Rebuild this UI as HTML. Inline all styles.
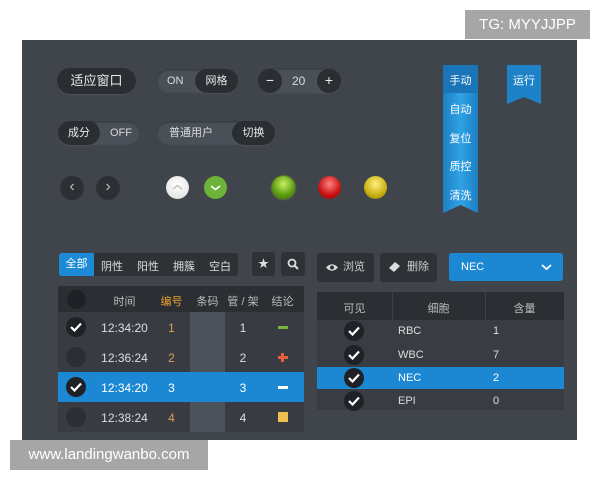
<!DOCTYPE html>
<html><head><meta charset="utf-8"><style>
*{margin:0;padding:0;box-sizing:border-box}
body{width:600px;height:480px;background:#fff;position:relative;overflow:hidden;font-family:"Liberation Sans","Noto Sans CJK SC",sans-serif;}
.a{position:absolute}
#p{left:22px;top:40px;width:555px;height:400px;background:#40454c}
.pill{position:absolute;border-radius:13px;background:#4a5058;box-shadow:inset 0 1px 2px rgba(0,0,0,.35);color:#d8dadd;font-size:11px}
.pill span{line-height:24px;top:0 !important}
.dk{position:absolute;background:#2a2d32;border-radius:13px;color:#e8e8e8;font-size:11px;text-align:center;box-shadow:0 1px 1px rgba(255,255,255,.08)}
.c{position:absolute;border-radius:50%}
.t{position:absolute;font-size:11px;color:#ddd;text-align:center}
.chk{position:absolute;width:20px;height:20px;border-radius:50%;background:#1e2125}
.chk svg{position:absolute;left:4px;top:5px}
</style></head><body>
<div class="a" style="left:465px;top:10px;width:125px;height:29px;background:#a6a6a6;color:#fff;font-size:15px;line-height:29px;text-align:center">TG: MYYJJPP</div>
<div id="p" class="a"></div>

<!-- row 1 -->
<div class="dk" style="left:57px;top:68px;width:79px;height:26px;line-height:26px;font-size:13px">适应窗口</div>
<div class="pill" style="left:157px;top:69px;width:81px;height:24px"><span class="a" style="left:10px">ON</span><div class="dk" style="left:38px;top:0;width:43px;height:24px;line-height:24px">网格</div></div>
<div class="pill" style="left:257px;top:68px;width:85px;height:26px"><div class="c" style="left:1px;top:1px;width:24px;height:24px;background:#2a2d32;color:#eee;text-align:center;line-height:22px;font-size:14px">−</div><span class="a" style="left:35px;line-height:26px !important;font-size:12px">20</span><div class="c" style="left:60px;top:1px;width:24px;height:24px;background:#2a2d32;color:#eee;text-align:center;line-height:23px;font-size:14px">+</div></div>

<!-- row 2 -->
<div class="pill" style="left:58px;top:121px;width:82px;height:24px"><div class="dk" style="left:0;top:0;width:42px;height:24px;line-height:24px">成分</div><span class="a" style="left:52px">OFF</span></div>
<div class="pill" style="left:157px;top:121px;width:118px;height:24px"><span class="a" style="left:12px">普通用户</span><div class="dk" style="left:75px;top:0;width:43px;height:24px;line-height:24px">切换</div></div>

<!-- row 3 -->
<div class="c" style="left:60px;top:176px;width:24px;height:24px;background:#2c3035;color:#bbb;text-align:center;line-height:22px;font-size:16px">‹</div>
<div class="c" style="left:96px;top:176px;width:24px;height:24px;background:#2c3035;color:#bbb;text-align:center;line-height:22px;font-size:16px">›</div>
<div class="c" style="left:166px;top:176px;width:23px;height:23px;background:radial-gradient(circle at 50% 40%,#fff,#ddd)"><svg class="a" style="left:6px;top:8px" width="11" height="6"><path d="M1 5L5.5 1.5L10 5" stroke="#bbb" fill="none" stroke-width="1.3"/></svg></div>
<div class="c" style="left:204px;top:176px;width:23px;height:23px;background:#6cb33a"><svg class="a" style="left:6px;top:9px" width="11" height="6"><path d="M1 1L5.5 4.5L10 1" stroke="#fff" fill="none" stroke-width="1.5"/></svg></div>
<div class="c" style="left:272px;top:176px;width:23px;height:23px;background:radial-gradient(circle at 50% 35%,#c8f060,#5a9a10 60%,#3c6c08);box-shadow:0 0 2px #8c0"></div>
<div class="c" style="left:318px;top:176px;width:23px;height:23px;background:radial-gradient(circle at 50% 35%,#ff8080,#c81010 60%,#801010)"></div>
<div class="c" style="left:364px;top:176px;width:23px;height:23px;background:radial-gradient(circle at 50% 35%,#fff080,#c8b010 60%,#807008)"></div>

<!-- ribbons -->
<svg class="a" style="left:443px;top:65px" width="36" height="149"><defs><linearGradient id="g" x1="0" x2="1"><stop offset="0" stop-color="#1d7fc4"/><stop offset=".5" stop-color="#2fa3e6"/><stop offset="1" stop-color="#1d7fc4"/></linearGradient></defs><path d="M0 0H35V148L17.5 140L0 148Z" fill="url(#g)"/><rect width="35" height="28" fill="#1a75b8"/></svg>
<div class="t" style="left:443px;top:72px;width:35px;color:#fff">手动</div>
<div class="t" style="left:443px;top:101px;width:35px;color:#fff">自动</div>
<div class="t" style="left:443px;top:130px;width:35px;color:#fff">复位</div>
<div class="t" style="left:443px;top:158px;width:35px;color:#fff">质控</div>
<div class="t" style="left:443px;top:187px;width:35px;color:#fff">清洗</div>
<svg class="a" style="left:507px;top:65px" width="35" height="40"><path d="M0 0H34V39L17 32L0 39Z" fill="#1d82c8"/></svg>
<div class="t" style="left:507px;top:72px;width:34px;color:#fff">运行</div>

<!-- tabs -->
<div class="a" style="left:59px;top:253px;width:179px;height:23px;background:#2e3237;border-radius:3px"></div>
<div class="a" style="left:59px;top:253px;width:35px;height:23px;background:#1c8ad6;border-radius:3px 0 0 3px;color:#fff;font-size:11px;text-align:center;line-height:23px">全部</div>
<div class="t" style="left:94px;top:258px;width:36px">阴性</div>
<div class="t" style="left:130px;top:258px;width:36px">阳性</div>
<div class="t" style="left:166px;top:258px;width:36px">拥簇</div>
<div class="t" style="left:202px;top:258px;width:36px">空白</div>
<div class="a" style="left:252px;top:252px;width:23px;height:24px;background:#2e3237;border-radius:3px;color:#ddd;font-size:11px;text-align:center;line-height:24px">★</div>
<div class="a" style="left:281px;top:252px;width:24px;height:24px;background:#2e3237;border-radius:3px"><svg class="a" style="left:6px;top:6px" width="12" height="12"><circle cx="5" cy="5" r="3.5" stroke="#ddd" stroke-width="1.8" fill="none"/><path d="M7.5 7.5L11 11" stroke="#ddd" stroke-width="2"/></svg></div>

<!-- left table -->
<div class="a" style="left:58px;top:286px;width:246px;height:26px;background:#2b2e33"></div>
<div class="c" style="left:67px;top:290px;width:19px;height:19px;background:#1e2125"></div>
<div class="t" style="left:96px;top:293px;width:57px;color:#bbb">时间</div>
<div class="t" style="left:153px;top:293px;width:37px;color:#e8a030">编号</div>
<div class="t" style="left:190px;top:293px;width:35px;color:#bbb">条码</div>
<div class="t" style="left:225px;top:293px;width:36px;color:#bbb">管 / 架</div>
<div class="t" style="left:261px;top:293px;width:43px;color:#bbb">结论</div>
<div class="a" style="left:58px;top:312px;width:246px;height:120px;background:#383c42"></div>
<div class="a" style="left:190px;top:312px;width:35px;height:120px;background:#4d535b"></div>
<div class="a" style="left:58px;top:372px;width:246px;height:30px;background:#1c88d4"></div>
<div class="chk" style="left:66px;top:317px"><svg width="12" height="10"><path d="M1 5L4.5 8.5L11 1.5" stroke="#fff" stroke-width="2.2" fill="none"/></svg></div>
<div class="chk" style="left:66px;top:347px;background:#2b2f34"></div>
<div class="chk" style="left:66px;top:377px"><svg width="12" height="10"><path d="M1 5L4.5 8.5L11 1.5" stroke="#fff" stroke-width="2.2" fill="none"/></svg></div>
<div class="chk" style="left:66px;top:407px;background:#2b2f34"></div>
<div class="t" style="left:96px;top:321px;width:57px;font-size:12px">12:34:20</div>
<div class="t" style="left:96px;top:351px;width:57px;font-size:12px">12:36:24</div>
<div class="t" style="left:96px;top:381px;width:57px;font-size:12px;color:#fff">12:34:20</div>
<div class="t" style="left:96px;top:411px;width:57px;font-size:12px">12:38:24</div>
<div class="t" style="left:153px;top:321px;width:37px;color:#d8a050;font-size:12px">1</div>
<div class="t" style="left:153px;top:351px;width:37px;color:#d8a050;font-size:12px">2</div>
<div class="t" style="left:153px;top:381px;width:37px;color:#fff;font-size:12px">3</div>
<div class="t" style="left:153px;top:411px;width:37px;color:#d8a050;font-size:12px">4</div>
<div class="t" style="left:225px;top:321px;width:36px;font-size:12px">1</div>
<div class="t" style="left:225px;top:351px;width:36px;font-size:12px">2</div>
<div class="t" style="left:225px;top:381px;width:36px;font-size:12px;color:#fff">3</div>
<div class="t" style="left:225px;top:411px;width:36px;font-size:12px">4</div>
<div class="a" style="left:278px;top:326px;width:10px;height:3px;background:#7cb342"></div>
<div class="a" style="left:278px;top:356px;width:10px;height:3px;background:#e8603c"></div>
<div class="a" style="left:281px;top:353px;width:3px;height:9px;background:#e8603c"></div>
<div class="a" style="left:278px;top:386px;width:10px;height:3px;background:#fff"></div>
<div class="a" style="left:278px;top:412px;width:10px;height:10px;background:#f0c050"></div>

<!-- right buttons -->
<div class="a" style="left:317px;top:253px;width:57px;height:29px;background:#2e3237;border-radius:3px;color:#ccc;font-size:11px;line-height:29px;padding-left:26px">浏览</div>
<svg class="a" style="left:325px;top:263px" width="14" height="9"><path d="M1 4.5Q7 -2 13 4.5Q7 11 1 4.5Z" fill="#ddd"/><circle cx="7" cy="4.5" r="2" fill="#2e3237"/></svg>
<div class="a" style="left:380px;top:253px;width:57px;height:29px;background:#2e3237;border-radius:3px;color:#ccc;font-size:11px;line-height:29px;padding-left:27px">删除</div>
<svg class="a" style="left:388px;top:261px" width="13" height="12"><path d="M1 7L7 1L12 5L6 11Z" fill="#ddd"/></svg>
<div class="a" style="left:449px;top:253px;width:114px;height:28px;background:#1c88d4;border-radius:3px;color:#fff;font-size:11px;line-height:28px;padding-left:12px">NEC</div>
<svg class="a" style="left:541px;top:264px" width="11" height="7"><path d="M1 1L5.5 5L10 1" stroke="#fff" stroke-width="1.8" fill="none"/></svg>

<!-- right table -->
<div class="a" style="left:317px;top:292px;width:247px;height:28px;background:#2b2e33"></div>
<div class="a" style="left:392px;top:292px;width:1px;height:28px;background:#3d4147"></div>
<div class="a" style="left:485px;top:292px;width:1px;height:28px;background:#3d4147"></div>
<div class="t" style="left:317px;top:300px;width:75px;color:#bbb">可见</div>
<div class="t" style="left:392px;top:300px;width:93px;color:#bbb">细胞</div>
<div class="t" style="left:485px;top:300px;width:79px;color:#bbb">含量</div>
<div class="a" style="left:317px;top:320px;width:247px;height:90px;background:#393d43"></div>
<div class="a" style="left:317px;top:367px;width:247px;height:22px;background:#1c88d4"></div>
<div class="chk" style="left:344px;top:321px"><svg width="12" height="10"><path d="M1 5L4.5 8.5L11 1.5" stroke="#fff" stroke-width="2.2" fill="none"/></svg></div>
<div class="chk" style="left:344px;top:345px"><svg width="12" height="10"><path d="M1 5L4.5 8.5L11 1.5" stroke="#fff" stroke-width="2.2" fill="none"/></svg></div>
<div class="chk" style="left:344px;top:368px"><svg width="12" height="10"><path d="M1 5L4.5 8.5L11 1.5" stroke="#fff" stroke-width="2.2" fill="none"/></svg></div>
<div class="chk" style="left:344px;top:391px"><svg width="12" height="10"><path d="M1 5L4.5 8.5L11 1.5" stroke="#fff" stroke-width="2.2" fill="none"/></svg></div>
<div class="a" style="left:398px;top:325px;font-size:11px;color:#ddd">RBC</div>
<div class="a" style="left:398px;top:349px;font-size:11px;color:#ddd">WBC</div>
<div class="a" style="left:398px;top:372px;font-size:11px;color:#fff">NEC</div>
<div class="a" style="left:398px;top:395px;font-size:11px;color:#ddd">EPI</div>
<div class="a" style="left:493px;top:325px;font-size:11px;color:#ddd">1</div>
<div class="a" style="left:493px;top:349px;font-size:11px;color:#ddd">7</div>
<div class="a" style="left:493px;top:372px;font-size:11px;color:#fff">2</div>
<div class="a" style="left:493px;top:395px;font-size:11px;color:#ddd">0</div>

<div class="a" style="left:10px;top:440px;width:198px;height:30px;background:#a6a6a6;color:#fff;font-size:15px;line-height:30px;text-align:center">www.landingwanbo.com</div>
</body></html>
